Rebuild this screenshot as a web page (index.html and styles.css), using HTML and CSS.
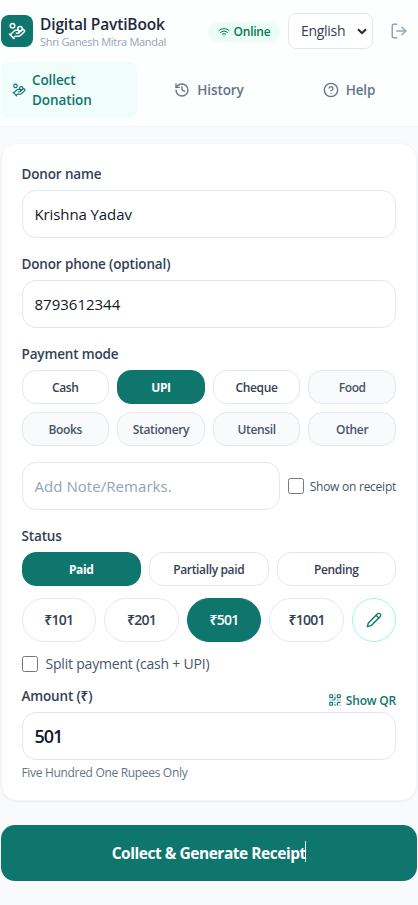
FILE: index.html
```html
<!DOCTYPE html>
<html lang="en">
<head>
<meta charset="utf-8">
<meta name="viewport" content="width=device-width, initial-scale=1">
<title>Digital PavtiBook</title>
<link rel="stylesheet" href="styles.css">
</head>
<body>
<svg class="defs" width="0" height="0" aria-hidden="true">
  <symbol id="i-hand" viewBox="0 0 24 24"><path d="M11 15h2a2 2 0 1 0 0-4h-3c-.6 0-1.100.2-1.400.6L3 17"/><path d="m7 21 1.600-1.400c.3-.4.8-.6 1.400-.6h4c1.100 0 2.100-.4 2.800-1.200l4.600-4.400a2 2 0 0 0-2.750-2.910l-4.200 3.900"/><path d="m2 16 6 6"/><circle cx="16" cy="9" r="2.900"/><circle cx="6" cy="5" r="3"/></symbol>
  <symbol id="i-history" viewBox="0 0 24 24"><path d="M3 12a9 9 0 1 0 9-9 9.750 9.750 0 0 0-6.740 2.740L3 8"/><path d="M3 3v5h5"/><path d="M12 7v5l4 2"/></symbol>
  <symbol id="i-help" viewBox="0 0 24 24"><circle cx="12" cy="12" r="10"/><path d="M9.090 9a3 3 0 0 1 5.830 1c0 2-3 3-3 3"/><path d="M12 17h.01"/></symbol>
  <symbol id="i-wifi" viewBox="0 0 24 24"><path d="M12 20h.01"/><path d="M2 8.820a15 15 0 0 1 20 0"/><path d="M5 12.859a10 10 0 0 1 14 0"/><path d="M8.500 16.429a5 5 0 0 1 7 0"/></symbol>
  <symbol id="i-logout" viewBox="0 0 24 24"><path d="M9 21H5a2 2 0 0 1-2-2V5a2 2 0 0 1 2-2h4"/><path d="m16 17 5-5-5-5"/><path d="M21 12H9"/></symbol>
  <symbol id="i-pencil" viewBox="0 0 24 24"><path d="M17 3a2.850 2.830 0 1 1 4 4L7.500 20.500 2 22l1.500-5.500Z"/><path d="m15 5 4 4"/></symbol>
  <symbol id="i-qr" viewBox="0 0 24 24"><rect width="5" height="5" x="3" y="3" rx="1"/><rect width="5" height="5" x="16" y="3" rx="1"/><rect width="5" height="5" x="3" y="16" rx="1"/><path d="M21 16h-3a2 2 0 0 0-2 2v3"/><path d="M21 21v.01"/><path d="M12 7v3a2 2 0 0 1-2 2H7"/><path d="M3 12h.01"/><path d="M12 3h.01"/><path d="M12 16v.01"/><path d="M16 12h1"/><path d="M21 12v.01"/><path d="M12 21v-1"/></symbol>
</svg>
<header class="header">
  <div class="topbar">
    <div class="logo"><svg class="icon icon-18"><use href="#i-hand"/></svg></div>
    <div class="brand">
      <div class="brand-name">Digital PavtiBook</div>
      <div class="brand-sub">Shri Ganesh Mitra Mandal</div>
    </div>
    <div class="online"><svg class="icon icon-12"><use href="#i-wifi"/></svg><span>Online</span></div>
    <button class="lang"><span>English</span><svg class="chevron" viewBox="0 0 10 7"><path d="m1 1.200 4 4 4-4"/></svg></button>
    <button class="logout"><svg class="icon icon-18"><use href="#i-logout"/></svg></button>
  </div>
  <nav class="nav">
    <a class="tab tab-active"><svg class="icon icon-14"><use href="#i-hand"/></svg><span>Collect<br>Donation</span></a>
    <a class="tab"><svg class="icon icon-16"><use href="#i-history"/></svg><span>History</span></a>
    <a class="tab"><svg class="icon icon-16"><use href="#i-help"/></svg><span>Help</span></a>
  </nav>
</header>
<main class="main">
  <section class="card">
    <label class="label">Donor name</label>
    <div class="input"><span>Krishna Yadav</span></div>
    <label class="label next">Donor phone (optional)</label>
    <div class="input"><span class="phone">8793612344</span></div>
    <label class="label next">Payment mode</label>
    <div class="modes">
      <button class="chip">Cash</button>
      <button class="chip chip-on">UPI</button>
      <button class="chip">Cheque</button>
      <button class="chip chip-soft">Food</button>
      <button class="chip chip-soft">Books</button>
      <button class="chip chip-soft">Stationery</button>
      <button class="chip chip-soft">Utensil</button>
      <button class="chip chip-soft">Other</button>
    </div>
    <div class="note-row">
      <div class="input note"><span class="placeholder">Add Note/Remarks.</span></div>
      <label class="check"><span class="box"></span><span class="check-small">Show on receipt</span></label>
    </div>
    <label class="label next">Status</label>
    <div class="statuses">
      <button class="chip chip-on">Paid</button>
      <button class="chip">Partially paid</button>
      <button class="chip">Pending</button>
    </div>
    <div class="amounts">
      <button class="amount">₹101</button>
      <button class="amount">₹201</button>
      <button class="amount amount-on">₹501</button>
      <button class="amount">₹1001</button>
      <button class="edit"><svg class="icon icon-16"><use href="#i-pencil"/></svg></button>
    </div>
    <label class="check split"><span class="box"></span><span class="check-large">Split payment (cash + UPI)</span></label>
    <div class="amount-head">
      <label class="label">Amount (₹)</label>
      <a class="qr"><svg class="icon icon-14"><use href="#i-qr"/></svg><span>Show QR</span></a>
    </div>
    <div class="input total"><span>501</span></div>
    <div class="words">Five Hundred One Rupees Only</div>
  </section>
  <button class="submit"><span class="submit-text">Collect &amp; Generate Receipt<i class="caret"></i></span></button>
</main>
</body>
</html>
```
FILE: styles.css
```css
* { box-sizing: border-box; }
body {
  margin: 0;
  height: 905px;
  overflow: hidden;
  background: #f8fafc;
  color: #334155;
  font-family: "Open Sans", "Noto Sans", sans-serif;
  font-size: 14px;
  line-height: 20px;
}
button { font: inherit; color: inherit; margin: 0; padding: 0; background: none; border: 0; }
.defs { position: absolute; }
.icon { flex: none; fill: none; stroke: currentColor; stroke-width: 2; stroke-linecap: round; stroke-linejoin: round; }
.icon-12 { width: 12px; height: 12px; }
.icon-14 { width: 14px; height: 14px; }
.icon-16 { width: 16px; height: 16px; }
.icon-18 { width: 18px; height: 18px; }

.header { height: 127px; background: #fdfefe; border-bottom: 1px solid #f1f5f9; }
.topbar { display: flex; align-items: center; height: 62px; padding: 0 10px 0 1px; }
.logo { display: flex; align-items: center; justify-content: center; width: 32px; height: 32px; border-radius: 8px; background: #0f766e; color: #fff; }
.brand { flex: 1; margin-left: 7px; padding-top: 2px; white-space: nowrap; }
.brand-name { font-size: 15.500px; font-weight: 600; line-height: 20px; color: #1e293b; letter-spacing: -.15px; }
.brand-sub { font-size: 11px; line-height: 16px; color: #94a3b8; letter-spacing: -.3px; }
.online { display: flex; align-items: center; justify-content: center; gap: 4px; width: 72px; height: 20px; margin-top: 1px; border-radius: 10px; background: #ecfdf5; color: #047857; font-size: 12px; font-weight: 600; letter-spacing: -.25px; }
.lang { display: flex; align-items: center; justify-content: space-between; width: 85px; height: 36px; margin-left: 8px; padding: 0 5px 0 12px; border: 1px solid #e2e8f0; border-radius: 8px; background: #fff; letter-spacing: -.3px; }
.chevron { width: 10px; height: 7px; fill: none; stroke: #1e293b; stroke-width: 2; }
.logout { display: flex; margin-left: 17px; color: #94a3b8; }
.nav { display: grid; grid-template-columns: repeat(3, 1fr); gap: 4px; padding: 0 1px; }
.tab { display: flex; align-items: center; justify-content: center; gap: 7px; height: 56px; border-radius: 8px; color: #64748b; font-size: 13.500px; font-weight: 600; letter-spacing: -.1px; }
.tab-active { justify-content: flex-start; gap: 6px; padding-left: 11px; background: #f0fdfa; color: #0f766e; }

.main { padding: 16px 1px 0 .5px; }
.card { height: 658px; padding: 20px; border: 1px solid #f1f5f9; border-radius: 16px; background: #fff; box-shadow: 0 1px 2px rgba(15, 23, 42, .05); }
.label { display: block; height: 20px; color: #334155; font-size: 13.500px; font-weight: 600; letter-spacing: -.15px; }
.next { margin-top: 16px; }
.input { display: flex; align-items: center; height: 48px; margin-top: 6px; padding: 0 12px; border: 1px solid #e2e8f0; border-radius: 14px; color: #0f172a; font-size: 15px; letter-spacing: -.1px; background: #fff; }
.phone { letter-spacing: 0; }
.placeholder { color: #94a3b8; letter-spacing: .05px; }
.modes { display: grid; grid-template-columns: repeat(4, 1fr); gap: 8px; margin-top: 6px; }
.chip { height: 34px; padding-top: 1px; border: 1px solid #e2e8f0; border-radius: 14px; background: #fff; color: #334155; font-size: 12px; font-weight: 600; letter-spacing: -.35px; }
.chip-soft { background: #f8fafc; color: #475569; }
.chip-on { background: #0f766e; border-color: #0f766e; color: #fff; font-weight: 700; }
.note-row { display: flex; align-items: center; gap: 8px; margin-top: 16px; }
.note { flex: 1; margin-top: 0; }
.check { display: flex; align-items: center; color: #475569; white-space: nowrap; }
.box { width: 16px; height: 16px; border: 1px solid #767676; border-radius: 2.500px; background: #fff; }
.check-small { margin-left: 6px; padding-top: 1px; font-size: 12px; letter-spacing: -.25px; }
.check-large { margin-left: 8px; font-size: 14px; letter-spacing: -.2px; }
.statuses { display: grid; grid-template-columns: repeat(3, 1fr); gap: 8px; margin-top: 6px; }
.amounts { display: grid; grid-template-columns: repeat(4, 1fr) 44px; gap: 8px; margin-top: 12px; }
.amount { height: 44px; border: 1px solid #e2e8f0; border-radius: 22px; background: #fff; color: #334155; font-size: 14px; font-weight: 600; letter-spacing: -.75px; }
.amount-on { background: #0f766e; border-color: #0f766e; color: #fff; }
.edit { display: flex; align-items: center; justify-content: center; height: 44px; border: 1px solid #99f6e4; border-radius: 50%; color: #0f766e; background: #fff; }
.split { height: 20px; margin-top: 12px; }
.amount-head { display: flex; justify-content: space-between; margin-top: 12px; }
.qr { display: flex; align-items: center; gap: 4px; height: 20px; margin-top: 4px; color: #0f766e; font-size: 12px; font-weight: 600; letter-spacing: -.2px; }
.qr span { padding-top: 1px; }
.total { margin-top: 2px; font-size: 18px; font-weight: 600; letter-spacing: -1px; }
.words { margin-top: 4px; color: #64748b; font-size: 12px; line-height: 18px; letter-spacing: -.32px; }
.submit { display: block; width: 100%; height: 56px; margin-top: 24px; border-radius: 14px; background: #0f766e; color: #fff; font-size: 15.500px; font-weight: 700; letter-spacing: -.47px; }
.submit-text { position: relative; }
.caret { position: absolute; right: 0; top: -1px; width: 1px; height: 21px; background: #fff; }
```
